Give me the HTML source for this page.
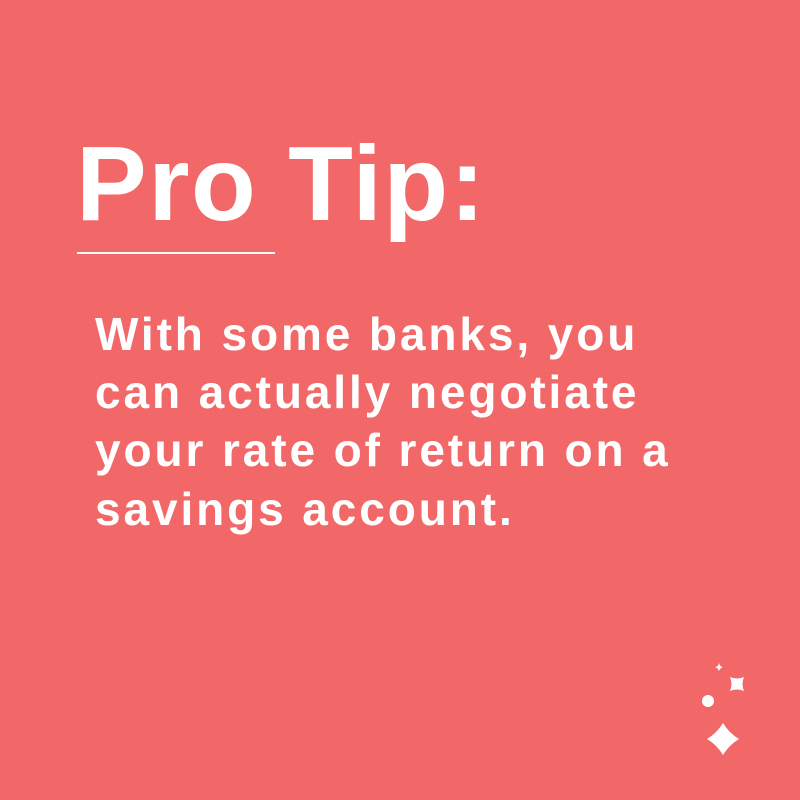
<!DOCTYPE html>
<html><head><style>
body{margin:0;width:800px;height:800px;background:#f26868;position:relative;overflow:hidden;font-family:"Liberation Sans",sans-serif;color:#fff;font-weight:bold}
.t{position:absolute;left:76px;top:124px;font-size:106px;line-height:120px;white-space:nowrap;letter-spacing:1.5px}
.hr{position:absolute;left:77px;top:252px;width:198px;height:2px;background:#fff}
.l{position:absolute;left:95px;font-size:46px;line-height:58px;white-space:nowrap;letter-spacing:2.9px}
</style></head><body>
<div class="t">Pro Tip:</div>
<div class="hr"></div>
<div class="l" style="top:305px">With some banks, you</div>
<div class="l" style="top:363px">can actually negotiate</div>
<div class="l" style="top:421px">your rate of return on a</div>
<div class="l" style="top:480px">savings account.</div>
<svg style="position:absolute;left:0;top:0" width="800" height="800">
<g fill="#fff">
<path d="M719 663 Q720 667 723 667 Q720 668 719 671 Q718 668 715 667 Q718 667 719 663Z"/>
<path d="M730 677 Q737 680 744 677 Q741 684 744 691 Q737 688 730 691 Q733 684 730 677Z"/>
<circle cx="708" cy="701" r="6"/>
<path d="M723 723 Q729 733 739 739 Q729 745 723 755 Q717 745 707 739 Q717 733 723 723Z"/>
</g></svg>
</body></html>
